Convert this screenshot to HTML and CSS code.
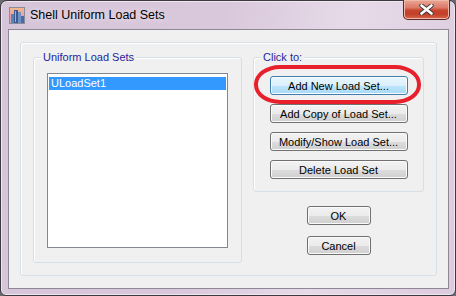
FILE: index.html
```html
<!DOCTYPE html>
<html>
	<head>
		<meta charset="utf-8" />
		<title>Shell Uniform Load Sets</title>
		<link rel="stylesheet" href="styles.css">
	</head>
	<body>
		<div class="window">
			<div class="titlebar">
				<svg class="app-icon" width="16" height="17" viewBox="0 0 16 17">
					<defs>
						<linearGradient id="sky" x1="0" y1="0" x2="0" y2="1">
							<stop offset="0" stop-color="#f4b88a"/>
							<stop offset="0.6" stop-color="#e8a0a8"/>
							<stop offset="1" stop-color="#b0b8d0"/>
						</linearGradient>
					</defs>
					<rect x="0" y="0" width="16" height="17" fill="url(#sky)"/>
					<rect x="0.5" y="0.5" width="15" height="16" fill="none" stroke="#8a8a9a"/>
					<rect x="2" y="7" width="3" height="9" fill="#5b7fb8"/>
					<rect x="5" y="3" width="4" height="13" fill="#3a5a90"/>
					<rect x="9" y="5" width="3" height="11" fill="#7090c8"/>
					<rect x="12" y="9" width="3" height="7" fill="#4a6aa0"/>
					<rect x="6" y="4" width="1" height="11" fill="#8fb0e0"/>
				</svg>
				<span class="title">Shell Uniform Load Sets</span>
				<div class="close">
					<svg width="15" height="11" viewBox="0 0 15 11">
						<path d="M2.5 1.5 L12.5 9.5 M12.5 1.5 L2.5 9.5" stroke="#3a3a3a" stroke-width="4.4" stroke-linecap="round"/>
						<path d="M2.5 1.5 L12.5 9.5 M12.5 1.5 L2.5 9.5" stroke="#ffffff" stroke-width="2.6" stroke-linecap="round"/>
					</svg>
				</div>
			</div>

			<div class="client">
				<div class="outer">
					<div class="group sets">
						<span class="group-title">Uniform Load Sets</span>
						<ul class="list">
							<li class="selected">ULoadSet1</li>
						</ul>
					</div>

					<div class="right-col">
						<div class="group actions">
							<span class="group-title">Click to:</span>
							<button class="btn wide hot">Add New Load Set...</button>
							<button class="btn wide">Add Copy of Load Set...</button>
							<button class="btn wide">Modify/Show Load Set...</button>
							<button class="btn wide">Delete Load Set</button>
							<div class="mark"></div>
						</div>
						<button class="btn small ok">OK</button>
						<button class="btn small">Cancel</button>
					</div>
				</div>
			</div>
		</div>
	</body>
</html>
```

FILE: styles.css
```css
* {
	padding: 0px;
	margin: 0px;
	box-sizing: border-box;
	list-style: none;
}

body {
	width: 456px;
	height: 296px;
	background: #6a6a70;
	font-family: "Liberation Sans", Arial, sans-serif;
	font-size: 11px;
	overflow: hidden;
}

.window {
	width: 456px;
	height: 296px;
	border: 1px solid #3c3a40;
	border-radius: 7px 7px 6px 6px;
	background: linear-gradient(100deg, #d6c4d8 0%, #d9c8db 45%, #e6dae8 70%, #dccbdd 100%);
	padding: 0 6px 6px 7px;
	display: flex;
	flex-direction: column;
	box-shadow: inset 0 0 0 1px #efe6f0;
}

/* 标题栏 */
.titlebar {
	height: 28px;
	display: flex;
	align-items: center;
	position: relative;
}

.app-icon {
	margin-left: 1px;
	margin-top: 1px;
}

.title {
	margin-left: 5px;
	font-size: 12.5px;
	color: #000;
	text-shadow: 0 0 6px #f6eef6;
}

.close {
	position: absolute;
	top: -1px;
	right: -1px;
	width: 47px;
	height: 20px;
	border: 1px solid #5a2a26;
	border-top: none;
	border-radius: 0 0 5px 5px;
	background: linear-gradient(#eaa898 0%, #dc7a66 40%, #c8432c 55%, #c2402a 75%, #d8684c 100%);
	box-shadow: inset 0 0 0 1px #f0b8a8;
	display: flex;
	align-items: center;
	justify-content: center;
}

/* 窗口内容 */
.client {
	flex: 1;
	border: 1px solid #8e8796;
	background: #f0f0f0;
	padding: 12px 11px 12px 11px;
}

.outer {
	height: 100%;
	border: 1px solid #d5dfe5;
	border-radius: 3px;
	box-shadow: inset 1px 1px 0 #fff;
	padding: 14px 12px 12px 12px;
	display: grid;
	grid-template-columns: 209px 171px;
	column-gap: 11px;
}

.group {
	position: relative;
	border: 1px solid #d5dfe5;
	border-radius: 3px;
	box-shadow: inset 1px 1px 0 #fff;
}

.group-title {
	position: absolute;
	top: -7px;
	left: 7px;
	padding: 0 2px;
	background: #f0f0f0;
	color: #1f1f9e;
	line-height: 13px;
}

.sets {
	padding: 15px 13px 14px 13px;
}

.list {
	height: 100%;
	background: #fff;
	border: 1px solid #828790;
	padding: 3px 1px;
}

.list li {
	height: 13px;
	line-height: 13px;
	padding-left: 2px;
}

.selected {
	background: #3399ff;
	color: #fff;
}

.right-col {
	display: flex;
	flex-direction: column;
	align-items: center;
}

.actions {
	width: 171px;
	padding: 18px 0 12px 0;
	display: flex;
	flex-direction: column;
	align-items: center;
	gap: 9px;
}

.btn {
	height: 19px;
	font-family: "Liberation Sans", Arial, sans-serif;
	font-size: 11px;
	color: #000;
	border: 1px solid #707070;
	border-radius: 3px;
	background: linear-gradient(#f2f2f2 0%, #ebebeb 50%, #dddddd 51%, #cfcfcf 100%);
	box-shadow: inset 0 0 0 1px #fbfbfb;
}

.wide {
	width: 138px;
}

.small {
	width: 64px;
}

.hot {
	border-color: #3c7fb1;
	background: linear-gradient(#eaf6fd 0%, #d9f0fc 50%, #bee6fd 51%, #a7d9f5 100%);
}

.ok {
	margin-top: 14px;
}

.ok + .btn {
	margin-top: 11px;
}

/* 红圈标记 */
.mark {
	position: absolute;
	left: 0px;
	top: 7px;
	width: 167px;
	height: 39px;
	border: 4px solid #e8202c;
	border-radius: 26px / 19px;
}
```
